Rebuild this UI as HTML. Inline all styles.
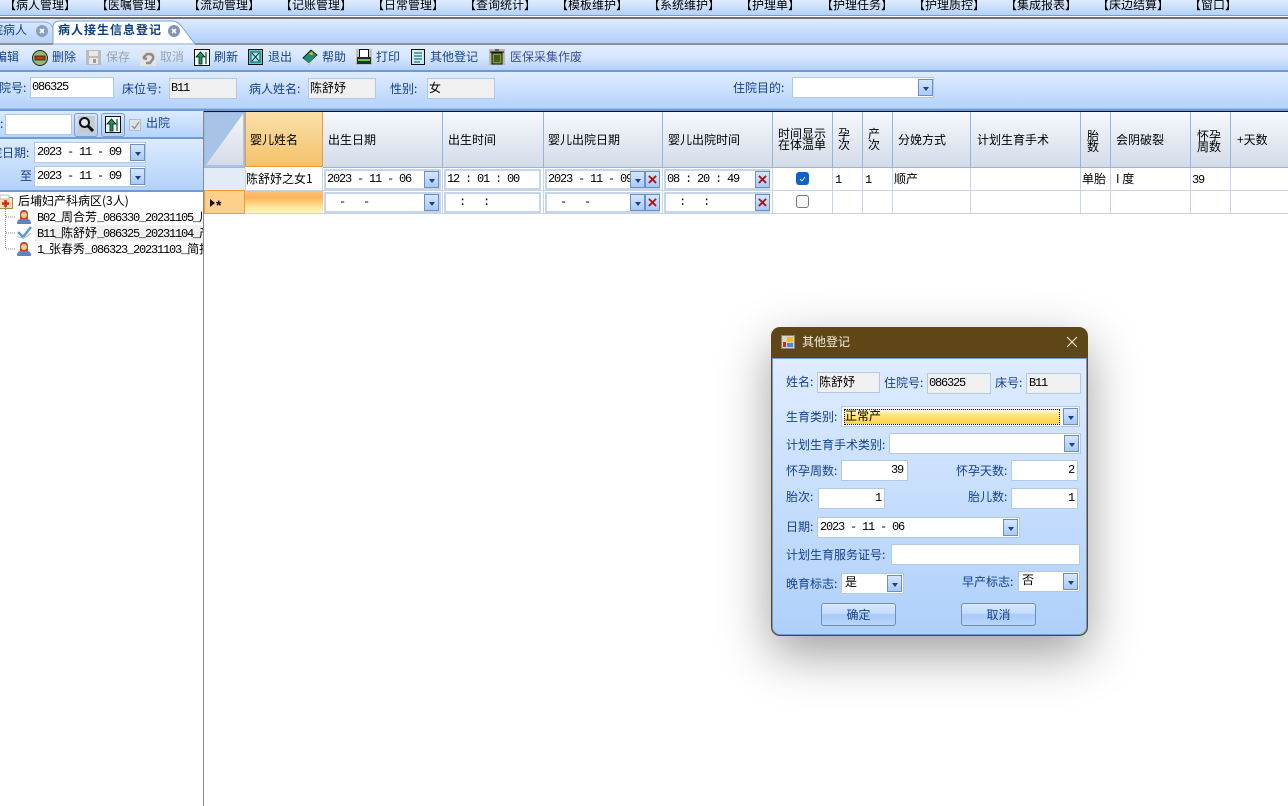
<!DOCTYPE html>
<html><head><meta charset="utf-8"><style>
html,body{margin:0;padding:0;width:1288px;height:806px;overflow:hidden;background:#fff}
body{position:relative;font:12px/14px "WenQuanYi Zen Hei","Noto Sans CJK SC",sans-serif;color:#000}
div,span,svg{position:absolute;box-sizing:border-box}
.t{white-space:pre;line-height:14px}
.n{color:#15428b}
.m{font-family:"Liberation Mono","WenQuanYi Zen Hei",monospace;font-size:12px;letter-spacing:-1.2px;margin-top:1px}
.f{background:#fff;border:1px solid #b3c8e4}
.g{background:#f0f0f0;border:1px solid #b3c8e4}
.b{width:15px;height:17px;border:1px solid #6b8fc2;background:linear-gradient(#d6e6fe,#a9c9f5)}
.b:after{content:"";position:absolute;left:4px;top:7px;border:3px solid transparent;border-top:4px solid #15428b;border-bottom:0}
.x{width:15px;height:17px;border:1px solid #6b8fc2;background:linear-gradient(#d6e6fe,#a9c9f5);color:#a81414;font:bold 17px/15px "Liberation Sans",sans-serif;text-align:center}
.h{top:112px;height:55px;background:linear-gradient(#f6f8fc,#d3dcea);border-right:1px solid #98b4d6}
.v{width:1px;background:#c8d4e6}
.c{background:#fff;border:2px solid #c5d5ea}
.btn{top:603px;width:75px;height:23px;border:1px solid #6f8fb8;border-radius:3px;background:linear-gradient(#d9e9fe,#c3dbfb 45%,#a9cbf8 50%,#b8d5fb);color:#15428b;text-align:center;line-height:21px}
.z{position:static;font:12px/14px "WenQuanYi Zen Hei","Noto Sans CJK SC",sans-serif;letter-spacing:0}
</style></head><body>

<!-- menu -->
<div style="left:0;top:0;width:1288px;height:16px;background:linear-gradient(#e1edfe,#b3d1fb);border-bottom:1px solid #6f9bd3"></div>
<span class="t" style="left:4px;top:-2px">【病人管理】</span><span class="t" style="left:96px;top:-2px">【医嘱管理】</span><span class="t" style="left:188px;top:-2px">【流动管理】</span><span class="t" style="left:280px;top:-2px">【记账管理】</span><span class="t" style="left:372px;top:-2px">【日常管理】</span><span class="t" style="left:464px;top:-2px">【查询统计】</span><span class="t" style="left:556px;top:-2px">【模板维护】</span><span class="t" style="left:648px;top:-2px">【系统维护】</span><span class="t" style="left:740px;top:-2px">【护理单】</span><span class="t" style="left:821px;top:-2px">【护理任务】</span><span class="t" style="left:913px;top:-2px">【护理质控】</span><span class="t" style="left:1005px;top:-2px">【集成报表】</span><span class="t" style="left:1097px;top:-2px">【床边结算】</span><span class="t" style="left:1189px;top:-2px">【窗口】</span>
<div style="left:0;top:17px;width:1288px;height:2px;background:#6d6d72"></div>

<!-- tab bar -->
<div style="left:0;top:19px;width:1288px;height:25px;background:linear-gradient(#dfebfe,#aecdf9)"></div>
<svg style="left:0;top:19px" width="200" height="26"><defs><linearGradient id="ta" x1="0" y1="0" x2="0" y2="1"><stop offset="0" stop-color="#d8e7fd"/><stop offset="1" stop-color="#b4d0f8"/></linearGradient></defs>
<path d="M-2 3H45Q50 3 53 9L57 25H-2Z" fill="url(#ta)" stroke="#8fb0dc"/>
<path d="M53 25V8Q53 2 60 2H172Q178 2 182 8L195 25Z" fill="#fff" stroke="#7ea3d6"/></svg>
<div class="t n" style="left:-21px;top:23px">住院病人</div>
<svg style="left:36px;top:25px" width="12" height="12"><circle cx="6" cy="6" r="6" fill="#8a9fbd"/><path d="M4 4L8 8M8 4L4 8" stroke="#fff" stroke-width="1.6"/></svg>
<div class="t" style="left:58px;top:23px;color:#0f3f80;font-weight:bold;letter-spacing:1px">病人接生信息登记</div>
<svg style="left:168px;top:25px" width="12" height="12"><circle cx="6" cy="6" r="6" fill="#7f95b5"/><path d="M4 4L8 8M8 4L4 8" stroke="#fff" stroke-width="1.6"/></svg>
<div style="left:195px;top:43px;width:1093px;height:2px;background:#8f8f94"></div>
<div style="left:0;top:43px;width:53px;height:2px;background:#8f8f94"></div>

<!-- toolbar -->
<div style="left:0;top:45px;width:1288px;height:25px;background:linear-gradient(#e1edff,#d6e6fe 50%,#b4d1fa)"></div>
<div style="left:0;top:70px;width:1288px;height:2px;background:#6e9ad3"></div>
<div class="t n" style="left:-5px;top:50px">编辑</div>
<svg style="left:32px;top:50px" width="16" height="16"><circle cx="8" cy="8" r="7.5" fill="#8fbc72" stroke="#222"/><rect x="3" y="6" width="10" height="4" fill="#c23a10" stroke="#222" stroke-width=".8"/></svg>
<div class="t n" style="left:52px;top:50px">删除</div>
<svg style="left:86px;top:50px" width="15" height="15"><rect x="0" y="0" width="15" height="15" fill="#bcbcbc"/><rect x="3" y="1" width="9" height="5" fill="#e8e8e8"/><rect x="3" y="8" width="9" height="6" fill="#e8e8e8"/><rect x="7" y="9" width="3" height="4" fill="#999"/></svg>
<div class="t" style="left:106px;top:50px;color:#9aa3ae">保存</div>
<svg style="left:140px;top:50px" width="16" height="16"><rect width="16" height="16" fill="#e4e4e4"/><path d="M3 8L7 4H10Q14 5 13 9L10 13H6M3 8L7 9" stroke="#8c8c8c" stroke-width="2.5" fill="none"/></svg>
<div class="t" style="left:160px;top:50px;color:#9aa3ae">取消</div>
<svg style="left:194px;top:49px" width="16" height="17"><rect x=".5" y=".5" width="15" height="16" fill="#e8fff4" stroke="#111"/><path d="M5 15V8H2L6.500 3L11 8H8V15Z" fill="#189a5c" stroke="#111" stroke-width=".8"/><path d="M12 3V15" stroke="#111"/></svg>
<div class="t n" style="left:214px;top:50px">刷新</div>
<svg style="left:248px;top:49px" width="15" height="16"><rect x=".5" y=".5" width="14" height="15" fill="#5cc9c4" stroke="#111"/><rect x="3" y="3" width="9" height="10" fill="#a8ecea" stroke="#155"/><path d="M4 4L11 12M11 4L4 12" stroke="#135"/></svg>
<div class="t n" style="left:268px;top:50px">退出</div>
<svg style="left:302px;top:49px" width="16" height="16"><path d="M1 9L9 1L15 6L7 15Z" fill="#1e8e6e" stroke="#123"/><path d="M1 10L7 15L15 7" stroke="#dde" fill="none"/><path d="M7 5L10 3L11 6" fill="#fc3" stroke="#c90"/></svg>
<div class="t n" style="left:322px;top:50px">帮助</div>
<svg style="left:356px;top:49px" width="16" height="16"><rect width="16" height="16" fill="#b9c1c9"/><rect x="3.500" y=".5" width="9" height="8" fill="#fff" stroke="#111"/><rect x="1" y="8" width="14" height="7" fill="#2a2a2a"/><rect x="2" y="10" width="12" height="2" fill="#58d02c"/></svg>
<div class="t n" style="left:376px;top:50px">打印</div>
<svg style="left:411px;top:49px" width="14" height="16"><rect x=".5" y=".5" width="13" height="15" fill="#c8f0e4" stroke="#111"/><path d="M3 4H11M3 7H11M3 10H11M3 13H9" stroke="#147" stroke-width="1"/></svg>
<div class="t n" style="left:430px;top:50px">其他登记</div>
<svg style="left:489px;top:49px" width="16" height="16"><rect width="16" height="16" fill="#bbb9a8"/><rect x="3" y="4" width="10" height="11" fill="#7ca02e" stroke="#111"/><path d="M1 3H15M6 1H10M6 6V13M8 6V13M10 6V13" stroke="#111"/></svg>
<div class="t" style="left:510px;top:50px;color:#3b4f94">医保采集作废</div>

<!-- form -->
<div style="left:0;top:72px;width:1288px;height:37px;background:linear-gradient(#dfecff,#b4d2fb)"></div>
<div style="left:0;top:108px;width:1288px;height:3px;background:#6f9cd6;border-top:1px solid #9dbce6"></div>
<div class="t n" style="left:-13px;top:81px">住院号:</div>
<div class="f" style="left:30px;top:77px;width:84px;height:21px"></div><div class="t m" style="left:32px;top:79px">086325</div>
<div class="t n" style="left:122px;top:82px">床位号:</div>
<div class="g" style="left:169px;top:78px;width:68px;height:21px"></div><div class="t m" style="left:171px;top:80px">B11</div>
<div class="t n" style="left:249px;top:82px">病人姓名:</div>
<div class="g" style="left:308px;top:78px;width:68px;height:21px"></div><div class="t" style="left:310px;top:81px">陈舒妤</div>
<div class="t n" style="left:390px;top:82px">性别:</div>
<div class="g" style="left:427px;top:78px;width:68px;height:21px"></div><div class="t" style="left:429px;top:81px">女</div>
<div class="t n" style="left:733px;top:81px">住院目的:</div>
<div class="f" style="left:792px;top:77px;width:142px;height:21px"></div><div class="b" style="left:918px;top:79px"></div>

<!-- left panel -->
<div style="left:0;top:111px;width:203px;height:27px;background:linear-gradient(#dcebff,#b5d3fb)"></div>
<div style="left:0;top:137px;width:203px;height:2px;background:#6f9cd6"></div>
<div style="left:0;top:139px;width:203px;height:51px;background:linear-gradient(#dcebff,#b3d1fa)"></div>
<div style="left:0;top:190px;width:203px;height:2px;background:#6f9cd6"></div>
<div class="t n" style="left:0;top:117px">:</div>
<div class="f" style="left:5px;top:114px;width:67px;height:21px"></div>
<div style="left:74px;top:113px;width:24px;height:24px;border:1px solid #7f9fc8;border-radius:3px;background:linear-gradient(#d6e6fe,#b0cff8)"></div>
<svg style="left:78px;top:116px" width="17" height="17"><rect width="17" height="17" fill="#c8ccd2"/><circle cx="6.500" cy="6.500" r="4.500" fill="#dfe8f2" stroke="#111" stroke-width="2"/><path d="M10 10L15 15" stroke="#111" stroke-width="3"/></svg>
<div style="left:101px;top:113px;width:24px;height:24px;border:1px solid #7f9fc8;border-radius:3px;background:linear-gradient(#d6e6fe,#b0cff8)"></div>
<svg style="left:105px;top:116px" width="16" height="17"><rect x=".5" y=".5" width="15" height="16" fill="#e8fff4" stroke="#111"/><path d="M5 15V8H2L6.500 3L11 8H8V15Z" fill="#189a5c" stroke="#111" stroke-width=".8"/><path d="M12 3V15" stroke="#111"/></svg>
<div style="left:129px;top:119px;width:12px;height:12px;background:#dfe3e8;border:1px solid #b5bcc6"></div>
<svg style="left:131px;top:121px" width="9" height="9"><path d="M1 5L3.500 7.500L8 1" stroke="#7f8ea3" stroke-width="1.300" fill="none"/></svg>
<div class="t n" style="left:146px;top:116px">出院</div>
<div class="t n" style="left:-22px;top:146px">出院日期:</div>
<div class="f" style="left:34px;top:142px;width:112px;height:21px"></div><div class="t m" style="left:37px;top:144px">2023 - 11 - 09</div><div class="b" style="left:130px;top:144px"></div>
<div class="t n" style="left:20px;top:169px">至</div>
<div class="f" style="left:34px;top:166px;width:112px;height:21px"></div><div class="t m" style="left:37px;top:168px">2023 - 11 - 09</div><div class="b" style="left:130px;top:168px"></div>
<div style="left:203px;top:111px;width:1px;height:695px;background:#8a8a8a"></div>

<!-- tree -->
<div style="left:0;top:192px;width:203px;height:66px;overflow:hidden">
<div style="left:35px;top:33px;width:168px;height:16px;background:#f0f0f0"></div>
<svg style="left:-2px;top:2px" width="16" height="15"><rect x=".5" y="3.500" width="14" height="11" fill="#f4e2b4" stroke="#a98d4f"/><rect x="2" y="1" width="9" height="4" fill="#fff" stroke="#bbb"/><path d="M7.500 6V13M4 9.500H11" stroke="#e02010" stroke-width="2.400"/></svg>
<svg style="left:0;top:15px" width="18" height="50"><path d="M5.500 0V42M6 10H16M6 26H16M6 42H16" stroke="#888" stroke-dasharray="1 1"/></svg>
<div class="t" style="left:18px;top:2px">后埔妇产科病区(3人)</div>
<svg style="left:16px;top:17px" width="16" height="16"><path d="M1 15Q1 10 5 10H11Q15 10 15 15Z" fill="#5a84c4"/><path d="M4 10V5Q4 1 8 1Q12 1 12 5V10Z" fill="#b5502a"/><circle cx="8" cy="6" r="3" fill="#f4c8a0"/></svg>
<svg style="left:16px;top:33px" width="17" height="15"><path d="M2 7L7 12L15 2" stroke="#5d9ad0" stroke-width="2.600" fill="none"/><path d="M1 11Q8 16 15 8" stroke="#a9c4de" fill="none"/></svg>
<svg style="left:16px;top:49px" width="16" height="16"><path d="M1 15Q1 10 5 10H11Q15 10 15 15Z" fill="#5a84c4"/><path d="M4 10V5Q4 1 8 1Q12 1 12 5V10Z" fill="#b5502a"/><circle cx="8" cy="6" r="3" fill="#f4c8a0"/></svg>
<div class="t m" style="left:37px;top:18px;margin:0">B02_<span class="z">周合芳</span>_086330_20231105_<span class="z">川</span></div>
<div class="t m" style="left:37px;top:34px;margin:0">B11_<span class="z">陈舒妤</span>_086325_20231104_<span class="z">产</span></div>
<div class="t m" style="left:37px;top:50px;margin:0">1_<span class="z">张春秀</span>_086323_20231103_<span class="z">简报</span></div>
</div>

<!-- grid header -->
<div style="left:204px;top:111px;width:1084px;height:1px;background:#111"></div>
<div style="left:204px;top:112px;width:41px;height:56px;background:#a8c3e8;border:1px solid #9ab8e0"></div>
<svg style="left:206px;top:114px" width="37" height="51"><defs><linearGradient id="co" x1="0" y1="0" x2="0" y2="1"><stop offset="0" stop-color="#f4f6fa"/><stop offset="1" stop-color="#d6dce6"/></linearGradient></defs><path d="M37 0V51H0Z" fill="url(#co)"/></svg>
<div style="left:245px;top:112px;width:78px;height:55px;background:linear-gradient(#fbe0aa,#f4c26a);border-right:1px solid #f09a38;border-left:1px solid #f09a38;border-bottom:1px solid #f09a38"></div>
<div class="t" style="left:250px;top:133px">婴儿姓名</div>
<div class="h" style="left:323px;width:120px"></div><div class="t" style="left:328px;top:133px">出生日期</div>
<div class="h" style="left:443px;width:101px"></div><div class="t" style="left:448px;top:133px">出生时间</div>
<div class="h" style="left:544px;width:119px"></div><div class="t" style="left:548px;top:133px">婴儿出院日期</div>
<div class="h" style="left:663px;width:110px"></div><div class="t" style="left:668px;top:133px">婴儿出院时间</div>
<div class="h" style="left:773px;width:60px"></div><div class="t" style="left:778px;top:128px;line-height:11px">时间显示
在体温单</div>
<div class="h" style="left:833px;width:30px"></div><div class="t" style="left:838px;top:128px;line-height:11px">孕
次</div>
<div class="h" style="left:863px;width:30px"></div><div class="t" style="left:868px;top:128px;line-height:11px">产
次</div>
<div class="h" style="left:893px;width:78px"></div><div class="t" style="left:898px;top:133px">分娩方式</div>
<div class="h" style="left:971px;width:110px"></div><div class="t" style="left:977px;top:133px">计划生育手术</div>
<div class="h" style="left:1081px;width:30px"></div><div class="t" style="left:1087px;top:130px;line-height:11px">胎
数</div>
<div class="h" style="left:1111px;width:80px"></div><div class="t" style="left:1116px;top:133px">会阴破裂</div>
<div class="h" style="left:1191px;width:40px"></div><div class="t" style="left:1197px;top:130px;line-height:11px">怀孕
周数</div>
<div class="h" style="left:1231px;width:57px;border-right:0"></div><div class="t" style="left:1237px;top:133px">+天数</div>
<div style="left:323px;top:167px;width:965px;height:1px;background:#98b4d6"></div>

<!-- grid rows -->
<div style="left:204px;top:168px;width:41px;height:22px;background:#e3ebf6"></div>
<div style="left:204px;top:190px;width:1084px;height:1px;background:#c8d4e6"></div>
<div style="left:204px;top:213px;width:1084px;height:1px;background:#c8d4e6"></div>
<div class="v" style="left:245px;top:168px;height:22px"></div>
<div class="v" style="left:322px;top:168px;height:46px"></div>
<div class="v" style="left:442px;top:168px;height:46px"></div>
<div class="v" style="left:543px;top:168px;height:46px"></div>
<div class="v" style="left:662px;top:168px;height:46px"></div>
<div class="v" style="left:772px;top:168px;height:46px"></div>
<div class="v" style="left:832px;top:168px;height:46px"></div>
<div class="v" style="left:862px;top:168px;height:46px"></div>
<div class="v" style="left:892px;top:168px;height:46px"></div>
<div class="v" style="left:970px;top:168px;height:46px"></div>
<div class="v" style="left:1080px;top:168px;height:46px"></div>
<div class="v" style="left:1110px;top:168px;height:46px"></div>
<div class="v" style="left:1190px;top:168px;height:46px"></div>
<div class="v" style="left:1230px;top:168px;height:46px"></div>
<div style="left:204px;top:190px;width:41px;height:24px;background:#fdd08c;border:1px solid #f09a38"></div>
<svg style="left:210px;top:199px" width="6" height="8"><path d="M0 0L5 4L0 8Z" fill="#111"/></svg>
<div class="t" style="left:216px;top:198px;font:bold 14px/14px 'Liberation Sans',sans-serif">*</div>
<div style="left:245px;top:191px;width:78px;height:22px;background:linear-gradient(#f9c27a,#fdb35a 30%,#fee9a0 75%,#fff3c0)"></div>
<div class="t" style="left:246px;top:172px">陈舒妤之女1</div>

<div class="c" style="left:324px;top:169px;width:117px;height:21px"></div><div class="t m" style="left:327px;top:171px">2023 - 11 - 06</div><div class="b" style="left:424px;top:171px"></div>
<div class="c" style="left:324px;top:192px;width:117px;height:21px"></div><div class="t m" style="left:327px;top:194px">  -   -</div><div class="b" style="left:424px;top:194px"></div>
<div class="c" style="left:444px;top:169px;width:97px;height:21px"></div><div class="t m" style="left:447px;top:171px">12 : 01 : 00</div>
<div class="c" style="left:444px;top:192px;width:97px;height:21px"></div><div class="t m" style="left:447px;top:194px">  :   :</div>
<div class="c" style="left:545px;top:169px;width:115px;height:21px"></div><div class="t m" style="left:548px;top:171px">2023 - 11 - 09</div><div class="b" style="left:630px;top:171px"></div><div class="x" style="left:645px;top:171px">×</div>
<div class="c" style="left:545px;top:192px;width:115px;height:21px"></div><div class="t m" style="left:548px;top:194px">  -   -</div><div class="b" style="left:630px;top:194px"></div><div class="x" style="left:645px;top:194px">×</div>
<div class="c" style="left:664px;top:169px;width:106px;height:21px"></div><div class="t m" style="left:667px;top:171px">08 : 20 : 49</div><div class="x" style="left:755px;top:171px">×</div>
<div class="c" style="left:664px;top:192px;width:106px;height:21px"></div><div class="t m" style="left:667px;top:194px">  :   :</div><div class="x" style="left:755px;top:194px">×</div>
<div style="left:796px;top:172px;width:13px;height:13px;border-radius:3px;background:#0f62c4"></div>
<svg style="left:798px;top:174px" width="9" height="9"><path d="M2 5L4 7L7 3" stroke="#cfe4ff" fill="none"/></svg>
<div style="left:796px;top:195px;width:13px;height:13px;border-radius:3px;background:#f6f6f6;border:1px solid #777"></div>
<div class="t m" style="left:835px;top:172px">1</div>
<div class="t m" style="left:865px;top:172px">1</div>
<div class="t" style="left:894px;top:172px">顺产</div>
<div class="t" style="left:1082px;top:172px">单胎</div>
<div class="t" style="left:1116px;top:172px">I 度</div>
<div class="t m" style="left:1192px;top:172px">39</div>

<!-- dialog -->
<div style="left:771px;top:327px;width:317px;height:309px;border-radius:9px;background:#5f4617;box-shadow:0 18px 50px rgba(0,0,0,.38)"></div>
<div style="left:772px;top:358px;width:315px;height:277px;border:1px solid #6f9bd4;border-radius:0 0 8px 8px;background:linear-gradient(#dfecff,#aed0fb)"></div>
<svg style="left:781px;top:335px" width="14" height="14"><rect x=".5" y=".5" width="13" height="13" fill="#d8d4c8" stroke="#8a8478"/><rect x="6" y="2" width="6" height="5" fill="#f2b91c"/><rect x="2" y="7" width="3" height="5" fill="#c32f1c"/><rect x="6" y="8" width="6" height="4" fill="#4a86d8"/></svg>
<div class="t" style="left:802px;top:335px;color:#f3ecdc">其他登记</div>
<svg style="left:1066px;top:336px" width="12" height="12"><path d="M1 1L11 11M11 1L1 11" stroke="#efe9dc" stroke-width="1.100"/></svg>

<div class="t n" style="left:786px;top:375px">姓名:</div>
<div class="g" style="left:817px;top:372px;width:63px;height:21px"></div><div class="t" style="left:819px;top:375px">陈舒妤</div>
<div class="t n" style="left:884px;top:376px">住院号:</div>
<div class="g" style="left:927px;top:373px;width:64px;height:21px"></div><div class="t m" style="left:929px;top:375px">086325</div>
<div class="t n" style="left:995px;top:376px">床号:</div>
<div class="g" style="left:1026px;top:373px;width:55px;height:21px"></div><div class="t m" style="left:1029px;top:375px">B11</div>

<div class="t n" style="left:786px;top:410px">生育类别:</div>
<div class="f" style="left:841px;top:406px;width:239px;height:21px;background:#f4f8ff"></div>
<div style="left:844px;top:409px;width:216px;height:16px;border:1px dotted #111;background:linear-gradient(#fffbe0,#ffe67c 35%,#fdd24a)"></div>
<div class="t" style="left:845px;top:409px">正常产</div>
<div class="b" style="left:1063px;top:408px"></div>

<div class="t n" style="left:786px;top:438px">计划生育手术类别:</div>
<div class="f" style="left:889px;top:433px;width:192px;height:21px"></div><div class="b" style="left:1064px;top:435px"></div>

<div class="t n" style="left:786px;top:464px">怀孕周数:</div>
<div class="f" style="left:841px;top:460px;width:67px;height:21px"></div><div class="t m" style="left:891px;top:462px">39</div>
<div class="t n" style="left:956px;top:464px">怀孕天数:</div>
<div class="f" style="left:1011px;top:460px;width:67px;height:21px"></div><div class="t m" style="left:1068px;top:462px">2</div>

<div class="t n" style="left:786px;top:490px">胎次:</div>
<div class="f" style="left:818px;top:488px;width:67px;height:21px"></div><div class="t m" style="left:875px;top:490px">1</div>
<div class="t n" style="left:968px;top:490px">胎儿数:</div>
<div class="f" style="left:1011px;top:488px;width:67px;height:21px"></div><div class="t m" style="left:1068px;top:490px">1</div>

<div class="t n" style="left:786px;top:520px">日期:</div>
<div class="f" style="left:817px;top:517px;width:203px;height:21px"></div><div class="t m" style="left:820px;top:519px">2023 - 11 - 06</div><div class="b" style="left:1003px;top:519px"></div>

<div class="t n" style="left:786px;top:548px">计划生育服务证号:</div>
<div class="f" style="left:891px;top:544px;width:189px;height:21px"></div>

<div class="t n" style="left:786px;top:577px">晚育标志:</div>
<div class="f" style="left:841px;top:573px;width:63px;height:21px"></div><div class="t" style="left:845px;top:575px">是</div><div class="b" style="left:887px;top:575px"></div>
<div class="t n" style="left:962px;top:575px">早产标志:</div>
<div class="f" style="left:1018px;top:571px;width:62px;height:21px"></div><div class="t" style="left:1022px;top:573px">否</div><div class="b" style="left:1063px;top:573px"></div>

<div class="btn" style="left:821px">确定</div>
<div class="btn" style="left:961px">取消</div>
</body></html>
